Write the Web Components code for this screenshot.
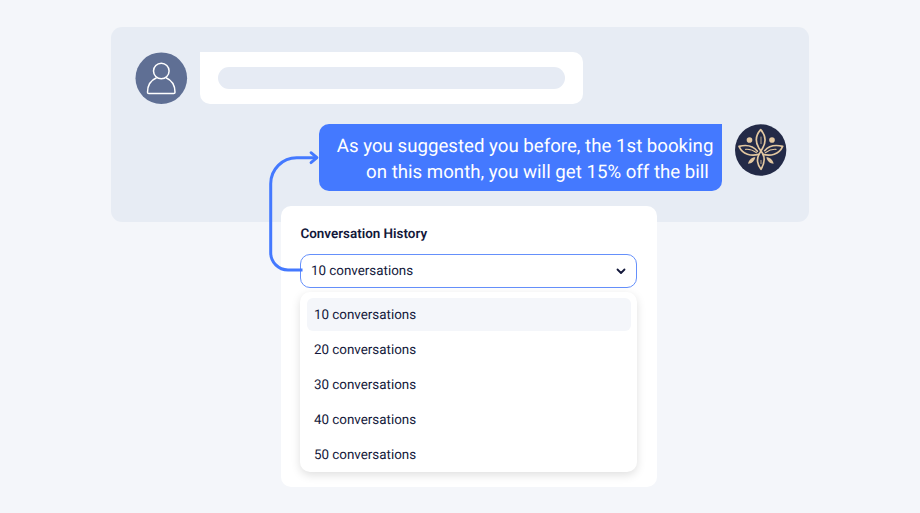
<!DOCTYPE html>
<html lang="en">
<head>
<meta charset="utf-8">
<title>Conversation History</title>
<style>
  body {
    margin: 0;
    background: #f4f6fa;
    font-family: Roboto, "Liberation Sans", sans-serif;
    color: #13183a;
    text-rendering: geometricPrecision;
  }
</style>
</head>
<body>
<history-page></history-page>

<script>
// Shared helper: attaches an open shadow root with the given markup
class BaseElement extends HTMLElement {
  constructor() {
    super();
    this.attachShadow({ mode: "open" });
  }

  connectedCallback() {
    this.shadowRoot.innerHTML = this.template();
  }
}

class UserAvatar extends BaseElement {
  template() {
    return `<style>
        :host { display: block; width: 52px; height: 52px; flex: none; }
        svg { display: block; width: 100%; height: 100%; overflow: visible; }
      </style>
      <svg viewBox="0 0 52 52" fill="none" stroke="#fff" stroke-width="1.5" stroke-linejoin="round">
        <circle cx="26.3" cy="26.2" r="25.8" fill="#5f6f94" stroke="none"/>
        <circle cx="26.3" cy="19" r="7.8"/>
        <path d="M21.6 25.7C15.8 28.2 12.5 33.7 12.5 40.2Q12.5 41.6 13.8 41.6H38.7Q40 41.6 40 40.2C40 33.7 36.8 28.2 31 25.7"/>
      </svg>`;
  }
}
customElements.define("user-avatar", UserAvatar);

class BrandAvatar extends BaseElement {
  template() {
    return `<style>
        :host { display: block; width: 52px; height: 52px; flex: none; }
        svg { display: block; width: 100%; height: 100%; }
      </style>
      <svg viewBox="30 27 156 156" fill="none" stroke="#e2c7a0" stroke-width="5" stroke-linecap="round" stroke-linejoin="round">
        <circle cx="107" cy="105" r="77" fill="#232a47" stroke="none"/>
        <g fill="#e2c7a0" stroke="none">
          <circle cx="73.5" cy="75" r="8.5"/>
          <circle cx="141" cy="75" r="8.5"/>
          <path d="M91 127C80 127 72 135 69 146C80 146 88 139 91 127Z"/>
          <path d="M124 127C135 127 143 135 146 146C135 146 127 139 124 127Z"/>
        </g>
        <path d="M107 44C91 62 91 81 101 98L112 114C120 127 118 146 108 163C97 150 94 132 102 118L113 99C124 80 123 62 107 44Z"/>
        <path d="M108 66V86M108 136V146" stroke-width="2.4"/>
        <path d="M101 118C79 124 53 119 42 94C66 88 86 94 97 109"/>
        <path d="M114 118C136 124 162 119 173 94C149 88 130 94 119 107"/>
        <path d="M62 103C74 102 85 106 94 113M153 103C141 102 131 106 121 113" stroke-width="3.4"/>
      </svg>`;
  }
}
customElements.define("brand-avatar", BrandAvatar);

class ChatBubble extends BaseElement {
  template() {
    return `<style>
        :host { display: block; box-sizing: border-box; }
        :host([kind="incoming"]) {
          width: 383.5px;
          height: 51.5px;
          padding: 15px 18px;
          background: #fff;
          border-radius: 0 10px 10px 10px;
        }
        :host([kind="reply"]) {
          width: 403px;
          height: 67.5px;
          padding: 9px 8.6px 0 0;
          background: #4479ff;
          border-radius: 10px 0 10px 10px;
          color: #fff;
          font-size: 18.66px;
          line-height: 26px;
          text-align: right;
          white-space: nowrap;
        }
      </style>
      <slot></slot>`;
  }
}
customElements.define("chat-bubble", ChatBubble);

class ChatPanel extends BaseElement {
  template() {
    return `<style>
        :host {
          display: flex;
          flex-direction: column;
          gap: 19.5px;
          box-sizing: border-box;
          width: 698px;
          height: 195px;
          margin: 0 auto;
          padding: 25.4px 22.5px 0 24.4px;
          background: #e7ecf4;
          border-radius: 11px;
        }
        .row { display: flex; gap: 12.5px; }
        .row--reply { justify-content: flex-end; }
        .placeholder {
          width: 347px;
          height: 22px;
          border-radius: 11px;
          background: #e6ebf4;
        }
        .line { display: block; }
        .line--last { margin-right: 4.5px; }
      </style>
      <div class="row">
        <user-avatar></user-avatar>
        <chat-bubble kind="incoming"><div class="placeholder"></div></chat-bubble>
      </div>
      <div class="row row--reply">
        <chat-bubble kind="reply">
          <span class="line">As you suggested you before, the 1st booking</span>
          <span class="line line--last">on this month, you will get 15% off the bill</span>
        </chat-bubble>
        <brand-avatar></brand-avatar>
      </div>`;
  }
}
customElements.define("chat-panel", ChatPanel);

class HistoryOption extends BaseElement {
  template() {
    return `<style>
        :host {
          display: flex;
          flex: none;
          align-items: center;
          box-sizing: border-box;
          height: 33.5px;
          padding: 3px 0 0 7px;
          border-radius: 6px;
          cursor: pointer;
        }
        :host([selected]) { background: #f4f6fa; }
      </style>
      <slot></slot>`;
  }
}
customElements.define("history-option", HistoryOption);

class HistorySelect extends BaseElement {
  template() {
    return `<style>
        :host { display: block; font-size: 13.4px; line-height: 18px; }
        .field {
          display: flex;
          align-items: center;
          justify-content: space-between;
          box-sizing: border-box;
          height: 34px;
          padding: 2px 9.5px 0 9.5px;
          border: 1px solid #6590fb;
          border-radius: 10px;
        }
        .field svg { margin-bottom: 3px; }
        .list {
          display: flex;
          flex-direction: column;
          gap: 1.65px;
          box-sizing: border-box;
          height: 180px;
          margin-top: 4px;
          padding: 5.5px 6.5px;
          background: #fff;
          border-radius: 10px;
          box-shadow: 0 3px 10px rgba(0, 0, 0, .13);
        }
      </style>
      <div class="field">
        <slot name="value"></slot>
        <svg width="12" height="12" viewBox="0 0 12 12" fill="none" stroke="#13183a" stroke-width="1.8" stroke-linecap="round" stroke-linejoin="round">
          <path d="M2.5 4.5L6 8L9.5 4.5"/>
        </svg>
      </div>
      <div class="list"><slot></slot></div>`;
  }
}
customElements.define("history-select", HistorySelect);

class HistoryCard extends BaseElement {
  template() {
    return `<style>
        :host {
          display: block;
          position: relative;
          box-sizing: border-box;
          width: 376px;
          height: 281px;
          margin: -16px 0 0 281px;
          padding: 20px 20px 0 19.4px;
          background: #fff;
          border-radius: 10px;
        }
        h2 {
          margin: 0 0 10px;
          font-size: 13.45px;
          font-weight: 600;
          line-height: 18px;
        }
      </style>
      <h2>Conversation History</h2>
      <history-select>
        <span slot="value">10 conversations</span>
        <history-option selected>10 conversations</history-option>
        <history-option>20 conversations</history-option>
        <history-option>30 conversations</history-option>
        <history-option>40 conversations</history-option>
        <history-option>50 conversations</history-option>
      </history-select>`;
  }
}
customElements.define("history-card", HistoryCard);

// Connector drawn over the panel and the card
class FlowArrow extends BaseElement {
  template() {
    return `<style>
        :host { position: absolute; left: 260px; top: 145px; pointer-events: none; }
        svg { display: block; }
      </style>
      <svg width="62" height="132" viewBox="260 145 62 132" fill="none" stroke="#4479ff" stroke-width="3" stroke-linejoin="round">
        <path d="M302.5 270H288A17.3 17.3 0 0 1 270.7 252.7V183.7A26 26 0 0 1 296.7 157.7H316.5"/>
        <path d="M311 152.7L317 157.7L311 162.7" stroke-width="2.8" stroke-linecap="round"/>
      </svg>`;
  }
}
customElements.define("flow-arrow", FlowArrow);

class HistoryPage extends BaseElement {
  template() {
    return `<style>
        :host {
          display: block;
          position: relative;
          box-sizing: border-box;
          width: 920px;
          height: 513px;
          padding-top: 27px;
          overflow: hidden;
        }
      </style>
      <chat-panel></chat-panel>
      <history-card></history-card>
      <flow-arrow></flow-arrow>`;
  }
}
customElements.define("history-page", HistoryPage);
</script>
</body>
</html>
